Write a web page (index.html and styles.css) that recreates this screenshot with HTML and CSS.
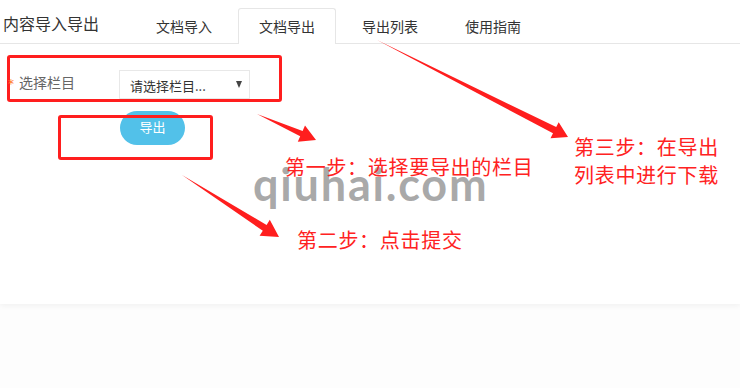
FILE: index.html
```html
<!DOCTYPE html>
<html lang="zh-CN">
<head>
<meta charset="utf-8">
<title>内容导入导出</title>
<link rel="stylesheet" href="styles.css">
</head>
<body>
<div class="panel">
  <div class="header">
    <h1 class="title">内容导入导出</h1>
    <ul class="tabs">
      <li class="tab">文档导入</li>
      <li class="tab active">文档导出</li>
      <li class="tab">导出列表</li>
      <li class="tab">使用指南</li>
    </ul>
  </div>
  <form class="form">
    <div class="row">
      <span class="req">*</span>
      <label class="label">选择栏目</label>
      <div class="select"><span>请选择栏目...</span><span class="caret"></span></div>
    </div>
    <div class="actions">
      <button type="button" class="btn">导出</button>
    </div>
  </form>

  <div class="mark box1"></div>
  <div class="mark box2"></div>
  <div class="watermark">qiuhai.com</div>
  <svg class="arrows" width="740" height="304" viewBox="0 0 740 304">
    <polygon fill="#ff1e1e" points="257,114 302.6,130.9 305,125.4 316,140 297.8,141.8 300.2,136.3"/>
    <polygon fill="#ff1e1e" points="182,175 266.6,224.9 269.8,219.8 279,237 259.6,235.8 262.8,230.8"/>
    <polygon fill="#ff1e1e" points="377,40 556.2,127.1 558.7,122.2 568,137 550.5,138.2 553,133.3"/>
  </svg>
  <div class="note n1">第一步：选择要导出的栏目</div>
  <div class="note n2">第二步：点击提交</div>
  <div class="note n3">第三步：在导出<br>列表中进行下载</div>
</div>
</body>
</html>
```
FILE: styles.css
```css
* { box-sizing: border-box; }
html, body { margin: 0; padding: 0; }
body {
  background: #fdfdfd;
  font-family: "Noto Sans CJK SC", "Noto Sans", sans-serif;
  color: #333;
  width: 740px;
  height: 388px;
  overflow: hidden;
}
.panel {
  position: relative;
  background: #fff;
  height: 304px;
  box-shadow: 0 2px 6px rgba(0,0,0,0.05);
}
.header {
  display: flex;
  align-items: flex-end;
  height: 44px;
  border-bottom: 1px solid #e6e6e6;
}
.title {
  margin: 0 36px 0 3px;
  align-self: flex-start;
  padding-top: 12px;
  font-size: 16px;
  font-weight: normal;
  line-height: 22px;
  color: #333;
}
.tabs {
  display: flex;
  list-style: none;
  margin: 0 0 -1px 0;
  padding: 0;
}
.tab {
  height: 35px;
  padding: 0 20px;
  margin-right: 5px;
  border: 1px solid transparent;
  border-bottom: none;
  border-radius: 3px 3px 0 0;
  font-size: 14px;
  line-height: 34px;
  color: #333;
}
.tab.active {
  border-color: #e6e6e6;
  background: #fff;
  height: 36px;
}
.form { padding: 26px 0 0 8px; }
.row {
  display: flex;
  align-items: center;
  height: 29px;
}
.req {
  position: relative;
  z-index: 2;
  color: #ff7a2e;
  font-family: "DejaVu Sans", sans-serif;
  font-size: 12px;
  width: 11px;
  margin-top: -2px;
}
.label {
  font-size: 14px;
  color: #666;
  width: 100px;
  margin-top: -5px;
}
.select {
  width: 131px;
  height: 29px;
  border: 1px solid #e8e8e8;
  display: flex;
  align-items: center;
  justify-content: space-between;
  padding: 2px 7px 0 10px;
  font-size: 13px;
  color: #333;
}
.caret {
  width: 0;
  height: 0;
  border-left: 3.5px solid transparent;
  border-right: 3.5px solid transparent;
  border-top: 7px solid #444;
  margin-top: -2px;
}
.actions { padding: 12px 0 0 112px; }
.btn {
  width: 65px;
  height: 34px;
  border: none;
  border-radius: 17px;
  background: #52c1e9;
  color: #fff;
  font-family: inherit;
  font-size: 13px;
  padding: 0 0 4px;
}
.mark {
  position: absolute;
  border: 3px solid #ff1e1e;
  border-radius: 3px;
}
.box1 { left: 7px; top: 55px; width: 275px; height: 47px; }
.box2 { left: 58px; top: 115px; width: 155px; height: 45px; }
.watermark {
  position: absolute;
  left: 253px;
  top: 162px;
  font-family: Lato, sans-serif;
  font-weight: bold;
  font-size: 45px;
  letter-spacing: 1.8px;
  color: rgba(150,150,150,0.82);
  line-height: 1;
}
.arrows { position: absolute; left: 0; top: 0; }
.note {
  position: absolute;
  color: #ff2222;
  font-size: 20px;
  letter-spacing: 0.7px;
  line-height: 28px;
}
.n1 { left: 285px; top: 153px; }
.n2 { left: 297px; top: 226px; }
.n3 { left: 574px; top: 133px; }
```
